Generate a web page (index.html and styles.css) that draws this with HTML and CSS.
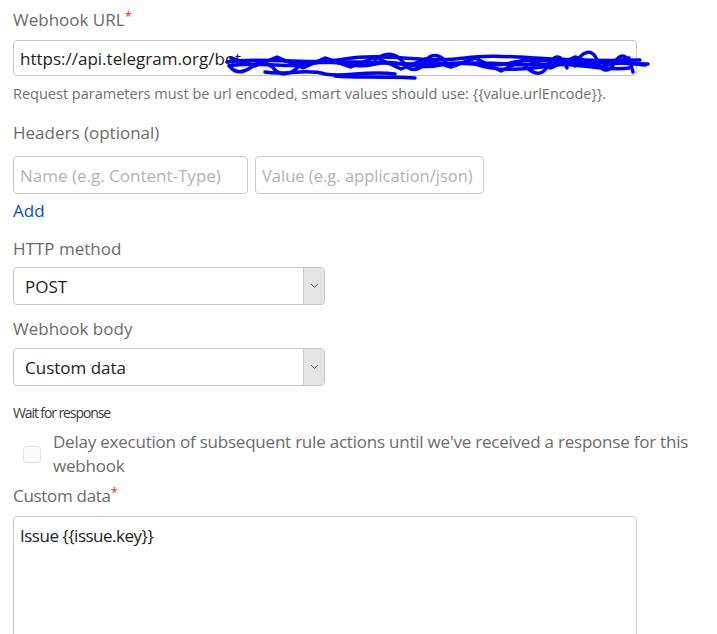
FILE: index.html
```html
<!DOCTYPE html>
<html lang="en">
<head>
  <meta charset="UTF-8" />
  <title>Webhook</title>
  <link rel="stylesheet" href="styles.css">
</head>
<body>
  <form class="form">
    <label class="label">Webhook URL<span class="req">*</span></label>
    <div class="url-wrap">
      <input class="input wide" type="text" value="https://api.telegram.org/bot">
      <!-- redaction scribble -->
      <svg class="scribble" width="425" height="40" viewBox="0 0 425 40">
        <g fill="none" stroke="#0000ff" stroke-width="3.5" stroke-linecap="round" stroke-linejoin="round">
          <path d="M2 16 C40 10 80 20 120 13 S200 18 240 12 S320 17 415 14" />
          <path d="M4 20 C30 14 60 24 90 17 C110 12 130 24 150 18 C170 12 190 25 215 19 C240 13 260 24 290 16 C320 10 350 22 380 15 L420 19" />
          <path d="M6 12 L30 20 L52 11 L78 22 L100 12 L126 21 L150 11 L176 23 L200 13 L226 21 L250 12 L276 25 L300 13 L326 22 L350 11 L376 21 L404 12" />
          <path d="M6 22 C12 28 20 26 28 20 C34 14 44 16 50 24 C56 30 66 28 72 22" />
          <path d="M40 26 C60 30 80 22 100 28 C120 32 140 24 170 28" />
          <path d="M110 30 C130 32 150 30 190 32" />
          <path d="M150 14 C160 6 170 6 178 16 C184 26 194 26 200 16 C206 6 216 8 222 18" />
          <path d="M60 15 C90 19 120 14 160 17 C200 20 240 15 280 18 C320 21 360 15 400 17" />
          <path d="M250 18 C270 26 300 24 330 19 C350 16 380 26 404 22" />
          <path d="M300 20 C310 30 318 30 324 18 C330 8 336 8 342 22" />
          <path d="M350 20 C356 4 368 2 372 14 C376 26 384 28 390 16 C396 6 404 8 408 26" />
          <path d="M380 18 C395 16 410 18 423 18" />
        </g>
      </svg>
    </div>
    <p class="help">Request parameters must be url encoded, smart values should use: {{value.urlEncode}}.</p>

    <label class="label headers-label">Headers (optional)</label>
    <div class="header-row">
      <input class="input name" type="text" placeholder="Name (e.g. Content-Type)">
      <input class="input value" type="text" placeholder="Value (e.g. application/json)">
    </div>
    <a class="add" href="#">Add</a>

    <label class="label method-label">HTTP method</label>
    <div class="select">
      <span class="select-text">POST</span>
      <span class="select-arrow">
        <svg width="9" height="6" viewBox="0 0 9 6"><path d="M1 1 L4.5 4.5 L8 1" fill="none" stroke="#555" stroke-width="1"/></svg>
      </span>
    </div>

    <label class="label body-label">Webhook body</label>
    <div class="select">
      <span class="select-text">Custom data</span>
      <span class="select-arrow">
        <svg width="9" height="6" viewBox="0 0 9 6"><path d="M1 1 L4.5 4.5 L8 1" fill="none" stroke="#555" stroke-width="1"/></svg>
      </span>
    </div>

    <div class="small-label">Wait for response</div>
    <label class="check">
      <span class="box"></span>
      <span class="check-text">Delay execution of subsequent rule actions until we've received a response for this webhook</span>
    </label>

    <label class="label data-label">Custom data<span class="req">*</span></label>
    <div class="textarea">Issue {{issue.key}}</div>
  </form>
</body>
</html>
```

FILE: styles.css
```css
body {
  margin: 0;
  background: #fff;
  font-family: "Open Sans", "Noto Sans", sans-serif;
  color: #172b4d;
  overflow: hidden;
}

.form {
  padding: 7px 0 0 13px;
}

.label {
  display: block;
  font-size: 17px;
  color: #6b6b6b;
  line-height: 26px;
  margin-bottom: 7px;
}

.req {
  color: #de350b;
  font-size: 13px;
  vertical-align: top;
  position: relative;
  top: -4px;
}

.url-wrap {
  position: relative;
  width: 624px;
}

.input {
  box-sizing: border-box;
  height: 36px;
  border: 1px solid #c8c8c8;
  border-radius: 4px;
  padding: 0 6px;
  font-family: inherit;
  font-size: 17px;
  color: #222;
  background: #fff;
  outline: none;
}

.input::placeholder {
  color: #b3b3b3;
}

.wide {
  width: 624px;
  display: block;
}

.scribble {
  position: absolute;
  left: 212px;
  top: 6px;
}

.help {
  margin: 8px 0 0 0;
  font-size: 14.5px;
  color: #707070;
  line-height: 20px;
}

.headers-label {
  margin-top: 16px;
  margin-bottom: 10px;
}

.header-row {
  display: flex;
  gap: 7px;
}

.name {
  width: 235px;
  height: 38px;
}

.value {
  width: 229px;
  height: 38px;
  font-size: 16.5px;
}

.add {
  display: block;
  width: max-content;
  margin-top: 4px;
  font-size: 17px;
  color: #0052cc;
  text-decoration: none;
  line-height: 26px;
}

.method-label {
  margin-top: 12px;
  margin-bottom: 5px;
}

.body-label {
  margin-top: 11px;
  margin-bottom: 6px;
}

.select {
  box-sizing: border-box;
  width: 312px;
  height: 38px;
  border: 1px solid #c8c8c8;
  border-radius: 4px;
  display: flex;
  align-items: center;
  justify-content: space-between;
  overflow: hidden;
}

.select-text {
  padding-left: 11px;
  font-size: 17px;
  color: #222;
}

.select-arrow {
  width: 20px;
  height: 100%;
  background: #e3e3e3;
  border-left: 1px solid #c8c8c8;
  display: flex;
  align-items: center;
  justify-content: center;
}

.small-label {
  margin-top: 17px;
  font-size: 14px;
  font-weight: 500;
  letter-spacing: -1.1px;
  color: #3d3d3d;
  line-height: 20px;
}

.check {
  display: flex;
  align-items: center;
  gap: 12px;
  padding-left: 10px;
  margin-top: 7px;
}

.box {
  flex: none;
  width: 16px;
  height: 15px;
  border: 1px solid #dfe1e6;
  border-radius: 3px;
  background: #fafbfc;
}

.check-text {
  max-width: 650px;
  font-size: 17px;
  letter-spacing: -0.22px;
  color: #6b6b6b;
  line-height: 24px;
}

.data-label {
  margin-top: 5px;
  margin-bottom: 7px;
  letter-spacing: -0.3px;
}

.textarea {
  box-sizing: border-box;
  width: 624px;
  height: 140px;
  border: 1px solid #c8c8c8;
  border-radius: 4px;
  padding: 7px 6px;
  font-size: 17px;
  letter-spacing: -0.5px;
  line-height: 24px;
  color: #222;
}
```
